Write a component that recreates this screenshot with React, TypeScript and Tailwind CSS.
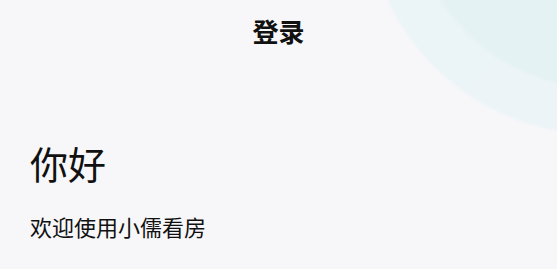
import React from "react";

const App = () => {
  return (
    <div
      className="relative w-full h-[269px] overflow-hidden bg-[#f7f7f9] text-[#111]"
      style={{ fontFamily: '"Noto Sans CJK SC", "Noto Sans", sans-serif' }}
    >
      {/* decorative rings, top right */}
      <div className="absolute left-[365px] top-[-335px] w-[470px] h-[470px] rounded-full bg-gradient-to-br from-[#e9f4f6] to-[#eef4f8] blur-[1px]" />
      <div className="absolute left-[412px] top-[-288px] w-[376px] h-[376px] rounded-full bg-[#e4f2f4] blur-[1px]" />

      <div className="relative">
        <header className="h-[62px] flex items-center justify-center">
          <h1 className="text-[26px] leading-[26px] font-bold">登录</h1>
        </header>

        <div className="px-[30px]">
          <h2 className="mt-[81px] text-[38px] leading-[40px]">你好</h2>
          <p className="mt-[32px] text-[22px] leading-[22px]">欢迎使用小儒看房</p>
        </div>
      </div>
    </div>
  );
};

export default App;
